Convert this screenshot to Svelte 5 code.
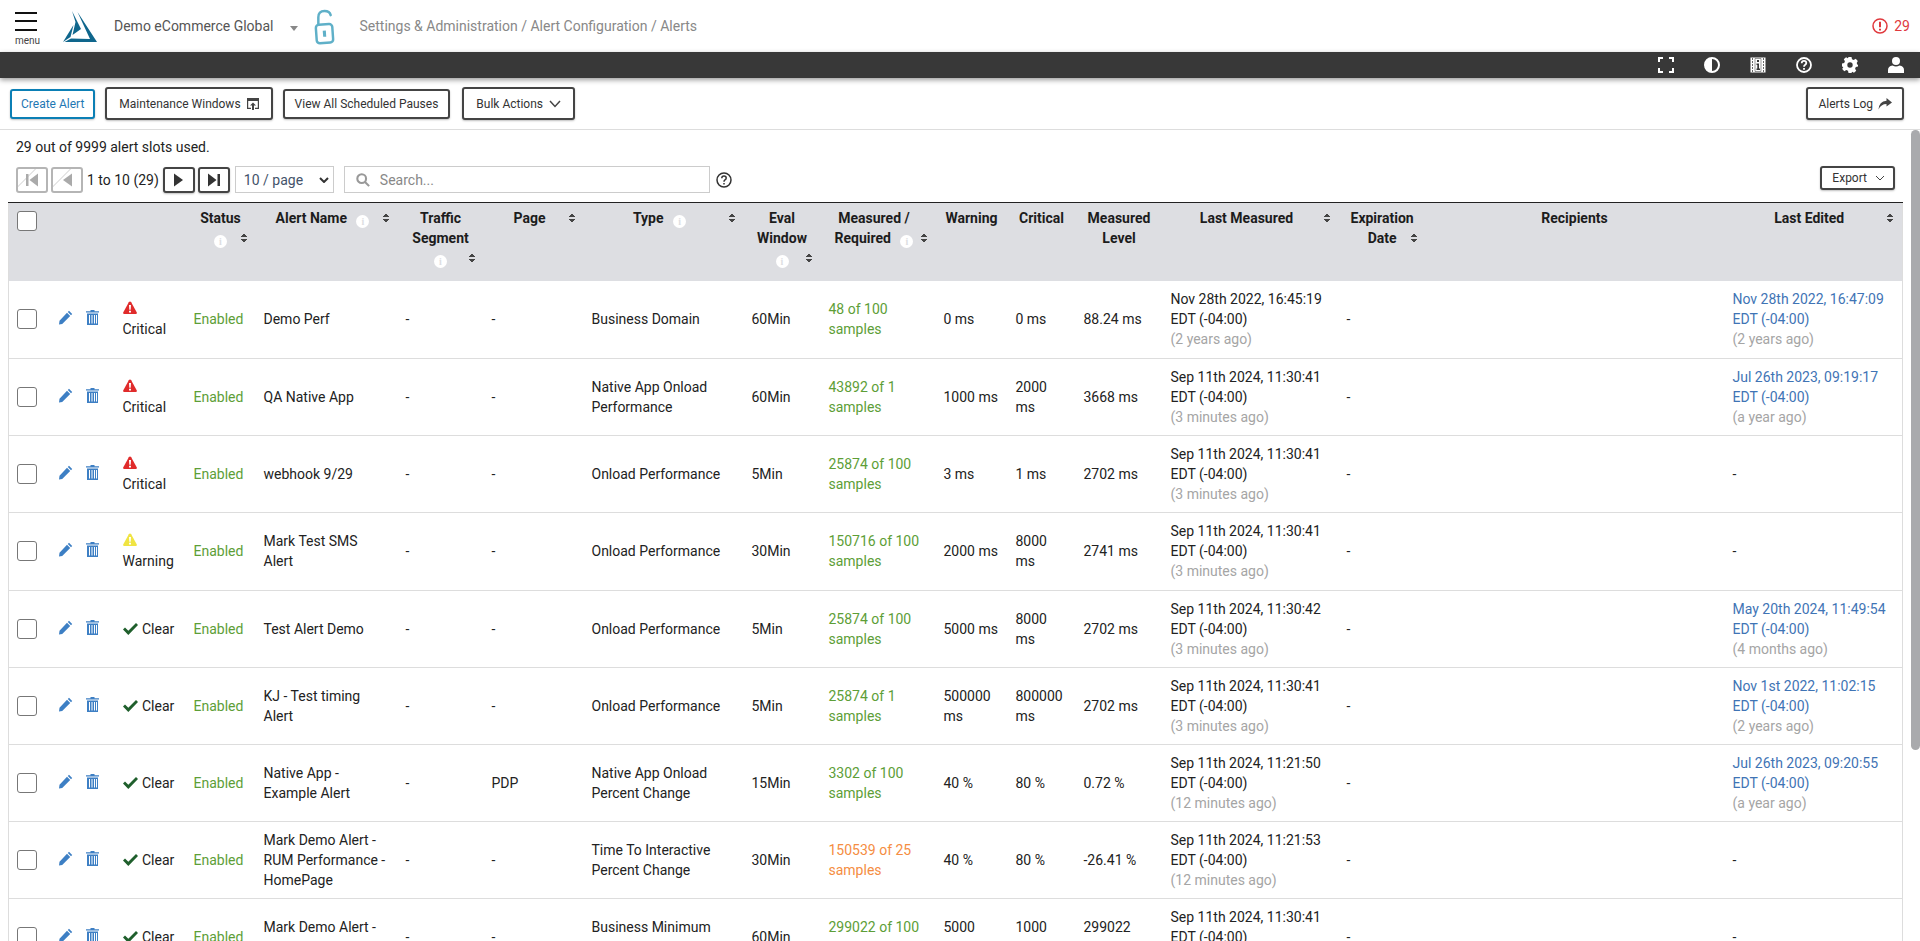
<script>
	const critical = { level: 'Critical', color: '#e02b2b' };
	const warning = { level: 'Warning', color: '#f0e442' };
	const clear = { level: 'Clear' };

	const columns = [
		{ label: '', width: 41 },
		{ label: '', width: 65 },
		{ label: '', width: 71 },
		{ label: 'Status', width: 70, info: true, sort: true, tight: true },
		{ label: 'Alert Name', width: 142, info: true, sort: true },
		{ label: 'Traffic Segment', width: 86, info: true, sort: true, tight: true },
		{ label: 'Page', width: 100, sort: true },
		{ label: 'Type', width: 160, info: true, sort: true },
		{ label: 'Eval Window', width: 77, info: true, sort: true, tight: true },
		{ label: 'Measured / Required', width: 115, info: true, sort: true },
		{ label: 'Warning', width: 72 },
		{ label: 'Critical', width: 68 },
		{ label: 'Measured Level', width: 87 },
		{ label: 'Last Measured', width: 176, sort: true },
		{ label: 'Expiration Date', width: 86, sort: true, tight: true },
		{ label: 'Recipients', width: 300 },
		{ label: 'Last Edited', width: 178, sort: true }
	];

	const rows = [
		{ sev: critical, name: 'Demo Perf', type: 'Business Domain', win: '60Min', req: '48 of 100 samples', warn: '0 ms', crit: '0 ms', lvl: '88.24 ms', last: 'Nov 28th 2022, 16:45:19', ago: '(2 years ago)', edited: 'Nov 28th 2022, 16:47:09', editedAgo: '(2 years ago)' },
		{ sev: critical, name: 'QA Native App', type: 'Native App Onload Performance', win: '60Min', req: '43892 of 1 samples', warn: '1000 ms', crit: '2000 ms', lvl: '3668 ms', last: 'Sep 11th 2024, 11:30:41', ago: '(3 minutes ago)', edited: 'Jul 26th 2023, 09:19:17', editedAgo: '(a year ago)' },
		{ sev: critical, name: 'webhook 9/29', type: 'Onload Performance', win: '5Min', req: '25874 of 100 samples', warn: '3 ms', crit: '1 ms', lvl: '2702 ms', last: 'Sep 11th 2024, 11:30:41', ago: '(3 minutes ago)' },
		{ sev: warning, name: 'Mark Test SMS Alert', type: 'Onload Performance', win: '30Min', req: '150716 of 100 samples', warn: '2000 ms', crit: '8000 ms', lvl: '2741 ms', last: 'Sep 11th 2024, 11:30:41', ago: '(3 minutes ago)' },
		{ sev: clear, name: 'Test Alert Demo', type: 'Onload Performance', win: '5Min', req: '25874 of 100 samples', warn: '5000 ms', crit: '8000 ms', lvl: '2702 ms', last: 'Sep 11th 2024, 11:30:42', ago: '(3 minutes ago)', edited: 'May 20th 2024, 11:49:54', editedAgo: '(4 months ago)' },
		{ sev: clear, name: 'KJ - Test timing Alert', type: 'Onload Performance', win: '5Min', req: '25874 of 1 samples', warn: '500000 ms', crit: '800000 ms', lvl: '2702 ms', last: 'Sep 11th 2024, 11:30:41', ago: '(3 minutes ago)', edited: 'Nov 1st 2022, 11:02:15', editedAgo: '(2 years ago)' },
		{ sev: clear, name: 'Native App - Example Alert', page: 'PDP', type: 'Native App Onload Percent Change', win: '15Min', req: '3302 of 100 samples', warn: '40 %', crit: '80 %', lvl: '0.72 %', last: 'Sep 11th 2024, 11:21:50', ago: '(12 minutes ago)', edited: 'Jul 26th 2023, 09:20:55', editedAgo: '(a year ago)' },
		{ sev: clear, name: 'Mark Demo Alert - RUM Performance - HomePage', type: 'Time To Interactive Percent Change', win: '30Min', req: '150539 of 25 samples', orange: true, warn: '40 %', crit: '80 %', lvl: '-26.41 %', last: 'Sep 11th 2024, 11:21:53', ago: '(12 minutes ago)' },
		{ sev: clear, name: 'Mark Demo Alert - Business', type: 'Business Minimum Sessions', win: '60Min', req: '299022 of 100 samples', warn: '5000 USD', crit: '1000 USD', lvl: '299022 USD', last: 'Sep 11th 2024, 11:30:41', ago: '(3 minutes ago)' }
	];
</script>

<div class="page">
	<header class="top">
		<div class="burger">
			<span></span><span></span><span></span>
			<small>menu</small>
		</div>
		<svg class="logo" viewBox="0 0 34 32" width="34" height="32" fill="#0f668c">
			<path d="M9 0 L18 18 L9.500 24 L12.500 11 Z" />
			<path d="M0 31 L10.500 14 L7.500 26 Z" />
			<path d="M14.500 1 L34 31 L1.500 31 L8 27.500 L27 28 Z" />
		</svg>
		<span class="account">Demo eCommerce Global</span>
		<i class="caret"></i>
		<svg class="lock" viewBox="0 0 20 35" width="21" height="36" fill="none" stroke="#5fb0c8" stroke-width="2.400">
			<g transform="rotate(-4 10 24)">
				<rect x="2" y="15" width="16" height="18" rx="3" />
				<rect x="8.500" y="21" width="3" height="6" fill="#5fb0c8" stroke="none" />
			</g>
			<path d="M4 15 V8 Q4 2 10 2 Q15 2 16 6" stroke-linecap="round" />
		</svg>
		<span class="crumbs">Settings &amp; Administration / Alert Configuration / Alerts</span>
		<span class="alarm">
			<svg viewBox="0 0 16 16" width="16" height="16" fill="none" stroke="#e0393e" stroke-width="1.500">
				<circle cx="8" cy="8" r="7" />
				<path d="M8 3.800 V9.200 M8 10.800 V12.400" stroke-width="2" />
			</svg>
			29
		</span>
	</header>

	<div class="darkbar">
		<svg viewBox="0 0 16 16" width="16" height="16" fill="none" stroke="#fff" stroke-width="2">
			<path d="M1 5 V1 H5 M11 1 H15 V5 M15 11 V15 H11 M5 15 H1 V11" />
		</svg>
		<svg viewBox="0 0 16 16" width="16" height="16">
			<circle cx="8" cy="8" r="7" fill="none" stroke="#fff" stroke-width="2" />
			<path d="M8 1 A7 7 0 0 0 8 15 Z" fill="#fff" />
		</svg>
		<svg viewBox="0 0 16 16" width="16" height="16">
			<rect x="0.500" y="0.500" width="15" height="15" fill="#fff" />
			<path d="M2 2 H3 M2 5 H3 M2 8 H3 M2 11 H3 M2 14 H3 M13 2 H14 M13 5 H14 M13 8 H14 M13 11 H14 M13 14 H14" stroke="#383838" stroke-width="1.500" />
			<path d="M5 1.500 V14.500 H11 V1.500 Z" fill="#fff" stroke="#383838" stroke-width="0.500" />
			<path d="M7 3 H9 V5 H7 Z M6.500 6.500 H9 V11.500 H10 V13 H6.500 V11.500 H7.300 V8 H6.500 Z" fill="#383838" />
		</svg>
		<svg viewBox="0 0 16 16" width="16" height="16" fill="none" stroke="#fff" stroke-width="1.800">
			<circle cx="8" cy="8" r="7" />
			<path d="M5.700 6.200 Q5.800 3.900 8 3.900 Q10.300 3.900 10.300 6 Q10.300 7.200 9 7.900 Q8 8.500 8 9.800" />
			<path d="M8 11 V12.800" />
		</svg>
		<svg viewBox="0 0 16 16" width="16" height="16">
			<path fill="#fff" fill-rule="evenodd" d="M6.500 0 H9.500 L10 2.200 L11.700 2.900 L13.700 1.800 L15.800 4 L14.700 5.900 L15.300 7.400 L16 8 L16 9.500 L13.800 10 L13.100 11.700 L14.200 13.700 L12 15.800 L10.100 14.700 L9.500 16 H6.500 L6 13.800 L4.300 13.100 L2.300 14.200 L0.200 12 L1.300 10.100 L0 9.500 V6.500 L2.200 6 L2.900 4.300 L1.800 2.300 L4 0.200 L5.900 1.300 Z M8 5.300 A2.700 2.700 0 1 0 8 10.700 A2.700 2.700 0 1 0 8 5.300 Z" />
		</svg>
		<svg viewBox="0 0 16 16" width="16" height="16" fill="#fff">
			<circle cx="8" cy="4" r="4" />
			<path d="M0 16 V13 Q0 9 4.500 8.500 Q8 10.500 11.500 8.500 Q16 9 16 13 V16 Z" />
		</svg>
	</div>

	<div class="toolbar">
		<button class="btn create">Create Alert</button>
		<button class="btn tall">
			Maintenance Windows
			<svg viewBox="0 0 12 12" width="12" height="12">
				<path fill="#444" d="M0 0 H12 V11 H8 V9.800 H10.800 V3 H1.200 V9.800 H4 V11 H0 Z" />
				<path fill="#444" d="M6 4.500 L9 7.500 H7 V12 H5 V7.500 H3 Z" />
			</svg>
		</button>
		<button class="btn pauses">View All Scheduled Pauses</button>
		<button class="btn tall bulk">
			Bulk Actions
			<svg viewBox="0 0 12 8" width="12" height="8" fill="none" stroke="#444" stroke-width="1.500">
				<path d="M1 1 L6 6.500 L11 1" />
			</svg>
		</button>
		<button class="btn tall log">
			Alerts Log
			<svg viewBox="0 0 14 12" width="14" height="12">
				<path fill="#444" d="M8.500 0 L14 4.500 L8.500 8.500 V6 Q3 6 0.500 11.500 Q1 3.500 8.500 2.800 Z" />
			</svg>
		</button>
	</div>

	<main class="main">
		<div class="thumb"></div>
		<p class="slots">29 out of 9999 alert slots used.</p>

		<div class="pager">
			<button class="pg off" aria-label="first">
				<svg viewBox="0 0 12 14" width="12" height="14"><path fill="#aaa" d="M0 1 H2.500 V13 H0 Z M12 0.500 V13.500 L3.500 7 Z" /></svg>
			</button>
			<button class="pg off" aria-label="previous">
				<svg viewBox="0 0 10 14" width="10" height="14"><path fill="#aaa" d="M10 0.500 V13.500 L1 7 Z" /></svg>
			</button>
			<span class="range">1 to 10 (29)</span>
			<button class="pg" aria-label="next">
				<svg viewBox="0 0 10 14" width="10" height="14"><path fill="#333" d="M0 0.500 V13.500 L9 7 Z" /></svg>
			</button>
			<button class="pg" aria-label="last">
				<svg viewBox="0 0 12 14" width="12" height="14"><path fill="#333" d="M0 0.500 V13.500 L8.500 7 Z M9.500 1 H12 V13 H9.500 Z" /></svg>
			</button>
			<div class="perpage">
				10 / page
				<svg viewBox="0 0 10 6" width="10" height="6" fill="none" stroke="#333" stroke-width="2"><path d="M1 1 L5 5 L9 1" /></svg>
			</div>
			<div class="search">
				<svg viewBox="0 0 16 16" width="14" height="14" fill="none" stroke="#999" stroke-width="2.400">
					<circle cx="6.500" cy="6.500" r="5" />
					<path d="M10 10 L15 15" />
				</svg>
				<span>Search...</span>
			</div>
			<svg class="help" viewBox="0 0 16 16" width="16" height="16" fill="none" stroke="#333" stroke-width="1.500">
				<circle cx="8" cy="8" r="7" />
				<path d="M5.800 6.200 Q5.800 4 8 4 Q10.200 4 10.200 6 Q10.200 7.200 9 7.900 Q8 8.500 8 9.800 M8 11 V12.600" />
			</svg>
			<button class="btn export">
				Export
				<svg viewBox="0 0 10 6" width="10" height="6" fill="none" stroke="#444" stroke-width="1"><path d="M1 1 L5 5 L9 1" /></svg>
			</button>
		</div>

		<table>
			<colgroup>
				{#each columns as c}
					<col style="width: {c.width}px" />
				{/each}
			</colgroup>
			<thead>
				<tr>
					{#each columns as c, i}
						<th class:tight={c.tight}>
							{#if i == 0}
								<span class="check"></span>
							{:else if c.sort}
								<div class="head">
									<div>
										{c.label}
										{#if c.info}
											<i class="info">i</i>
										{/if}
									</div>
									<span class="sort"></span>
								</div>
							{:else}
								{c.label}
							{/if}
						</th>
					{/each}
				</tr>
			</thead>
			<tbody>
				{#each rows as r}
					<tr>
						<td class="box"><span class="check"></span></td>
						<td>
							<div class="actions">
								<svg viewBox="0 0 15 15" width="15" height="15" fill="#3d7fc4">
									<path d="M11 0.800 L14.200 4 L13 5.200 L9.800 2 Z M9 2.800 L12.200 6 L4.200 14 L1 14.500 L1.500 10.800 Z" />
								</svg>
								<svg viewBox="0 0 13 15" width="13" height="15" fill="#3d7fc4">
									<path d="M4.500 0 H8.500 V1.200 H13 V2.500 H0 V1.200 H4.500 Z" />
									<path fill-rule="evenodd" d="M1 3.500 H12 V15 H1 Z M3 5 V13.500 H4 V5 Z M5.500 5 V13.500 H6.500 V5 Z M8 5 V13.500 H9 V5 Z M10 5 V13.500 H11 V5 Z" />
								</svg>
							</div>
						</td>
						<td class="sev">
							{#if r.sev.color}
								<svg viewBox="0 0 14 14" width="14" height="14">
									<path fill={r.sev.color} d="M7 0.500 Q7.800 0.500 8.200 1.200 L13.800 11.500 Q14.200 13 12.800 13 H1.200 Q-0.200 13 0.200 11.500 L5.800 1.200 Q6.200 0.500 7 0.500 Z" />
									<path fill="#fff" d="M6 4 H8 L7.700 8.800 H6.300 Z M6 9.800 H8 V11.500 H6 Z" />
								</svg>
								<br />
							{:else}
								<svg class="tick" viewBox="0 0 15 12" width="15" height="12">
									<path fill="#1f5f2c" d="M0 6.500 L2 4.500 L5.300 7.800 L13 0 L15 2 L5.300 12 Z" />
								</svg>
							{/if}
							{r.sev.level}
						</td>
						<td class="green">Enabled</td>
						<td>{r.name}</td>
						<td>-</td>
						<td>{r.page ?? '-'}</td>
						<td>{r.type}</td>
						<td>{r.win}</td>
						<td class={r.orange ? 'orange' : 'green'}>{r.req}</td>
						<td>{r.warn}</td>
						<td>{r.crit}</td>
						<td>{r.lvl}</td>
						<td>{r.last}<br />EDT (-04:00)<br /><span class="grey">{r.ago}</span></td>
						<td>-</td>
						<td></td>
						<td>
							{#if r.edited}
								<span class="link">{r.edited}<br />EDT (-04:00)</span><br /><span class="grey">{r.editedAgo}</span>
							{:else}
								-
							{/if}
						</td>
					</tr>
				{/each}
			</tbody>
		</table>
	</main>
</div>

<style>
	:global(body) {
		overflow: hidden;
	}

	.page {
		height: 100vh;
		display: flex;
		flex-direction: column;
		font-family: Roboto, 'Liberation Sans', sans-serif;
		font-size: 14px;
		line-height: 20px;
		color: #222;
		background: #fff;
	}

	.top {
		height: 52px;
		flex: none;
		display: flex;
		align-items: center;
		padding: 0 10px 0 15px;
		box-sizing: border-box;
	}

	.burger {
		width: 22px;
		height: 42px;
		margin-top: 9px;
		display: flex;
		flex-direction: column;
		gap: 6.500px;
		position: relative;
		padding-top: 2px;
		box-sizing: border-box;
	}

	.burger span {
		height: 2px;
		background: #111;
		flex: none;
	}

	.burger small {
		font-size: 10px;
		line-height: 10px;
		color: #444;
		margin-top: -1.500px;
		white-space: nowrap;
	}

	.logo {
		margin-left: 26px;
		margin-top: 2px;
	}

	.account {
		margin-left: 17px;
		color: #555;
	}

	.caret {
		width: 0;
		height: 0;
		margin: 4px 0 0 16px;
		border: 4px solid transparent;
		border-top: 5px solid #888;
		border-bottom: 0;
	}

	.lock {
		margin-left: 16px;
		margin-top: 1px;
	}

	.crumbs {
		margin-left: 25px;
		color: #888;
	}

	.alarm {
		margin-left: auto;
		display: flex;
		align-items: center;
		gap: 6px;
		color: #e0393e;
	}

	.darkbar {
		height: 26px;
		flex: none;
		background: #383838;
		display: flex;
		align-items: center;
		justify-content: flex-end;
		gap: 30px;
		padding-right: 16px;
		box-shadow: 0 2px 5px rgba(0, 0, 0, 0.4);
		position: relative;
	}

	.toolbar {
		height: 52px;
		flex: none;
		box-sizing: border-box;
		border-bottom: 1px solid #ddd;
		display: flex;
		align-items: center;
		gap: 10px;
		padding: 0 16px 0 10px;
	}

	.btn {
		height: 30px;
		padding: 0 12px;
		display: inline-flex;
		align-items: center;
		gap: 6px;
		background: #fff;
		border: 2px solid #444;
		border-radius: 3px;
		box-shadow: 0 1px 2px rgba(0, 0, 0, 0.25);
		font: 12px Roboto, sans-serif;
		color: #333;
	}

	.btn.tall {
		height: 33px;
	}

	.create {
		border-color: #0b7fb5;
		color: #1f78b4;
		padding: 0 9px;
	}

	.pauses {
		padding: 0 10px;
	}

	.bulk {
		margin-left: 2px;
	}

	.log {
		margin-left: auto;
		padding: 0 10px;
		gap: 5px;
	}

	.main {
		flex: 1;
		min-height: 0;
		overflow: hidden;
		padding: 0 18px 0 8px;
		position: relative;
	}

	.thumb {
		position: absolute;
		top: 0;
		right: 0;
		width: 9px;
		height: 620px;
		background: #a9aaad;
		border-radius: 5px;
	}

	.slots {
		margin: 7px 0 0 8px;
	}

	.pager {
		display: flex;
		align-items: center;
		margin: 9px 7px 0 8px;
		height: 27px;
		gap: 3px;
	}

	.pg {
		width: 32px;
		height: 26px;
		padding: 0;
		display: flex;
		align-items: center;
		justify-content: center;
		background: #fff;
		border: 2px solid #444;
		border-radius: 3px;
		box-shadow: 0 1px 2px rgba(0, 0, 0, 0.25);
	}

	.pg.off {
		border-color: #b5b5b5;
		background: repeating-linear-gradient(135deg, #fff 0 12px, #e6e6e6 12px 13px, #fff 13px 24px);
		box-shadow: none;
	}

	.range {
		margin: 0 1px;
		white-space: nowrap;
	}

	.perpage {
		width: 99px;
		height: 27px;
		margin-left: 2px;
		box-sizing: border-box;
		border: 1px solid #ccc;
		display: flex;
		align-items: center;
		justify-content: space-between;
		padding: 0 4px 0 8px;
		color: #44536a;
	}

	.search {
		width: 366px;
		height: 27px;
		margin-left: 7px;
		box-sizing: border-box;
		border: 1px solid #ccc;
		display: flex;
		align-items: center;
		gap: 10px;
		padding: 0 11px;
		color: #888;
	}

	.help {
		margin-left: 3px;
	}

	.export {
		margin-left: auto;
		height: 24px;
		gap: 8px;
		padding: 0 8px 0 10px;
		margin-top: -3px;
	}

	table {
		width: 1894px;
		table-layout: fixed;
		border-collapse: collapse;
		margin-top: 9px;
		border-left: 1px solid #ddd;
		border-right: 1px solid #ddd;
	}

	th {
		height: 78px;
		padding: 5px 12px 0 4px;
		box-sizing: border-box;
		vertical-align: top;
		background: #dddee2;
		border-top: 1px solid #222;
		font-weight: 700;
		text-align: center;
		color: #1c1c1c;
	}

	th:not(:has(.head)) {
		padding: 5px 8px 0;
	}

	th.tight {
		padding-left: 12px;
	}

	th:first-child {
		text-align: left;
		padding: 8px 0 0 8px;
	}

	.head {
		display: grid;
		grid-template-columns: 1fr 0;
		align-items: end;
	}

	.info {
		display: inline-block;
		width: 13px;
		height: 13px;
		margin-left: 6px;
		border-radius: 50%;
		background: #fff;
		color: #dddee2;
		font: 700 10px/13px 'Liberation Serif', serif;
		text-align: center;
		vertical-align: -2px;
	}

	.tight .info {
		margin-left: 0;
	}

	.sort {
		display: block;
		width: 8px;
		height: 20px;
		margin-left: -4px;
		background:
			linear-gradient(135deg, transparent 50%, #444 50%) 0 6px / 4px 3px no-repeat,
			linear-gradient(225deg, transparent 50%, #444 50%) 4px 6px / 4px 3px no-repeat,
			linear-gradient(45deg, transparent 50%, #444 50%) 0 11px / 4px 3px no-repeat,
			linear-gradient(315deg, transparent 50%, #444 50%) 4px 11px / 4px 3px no-repeat;
	}

	td {
		height: 77.200px;
		padding: 8px;
		box-sizing: border-box;
		border-bottom: 1px solid #ddd;
		vertical-align: middle;
		overflow-wrap: break-word;
	}

	tr:first-child td {
		height: 78px;
	}

	td.box {
		padding: 0 0 0 8px;
	}

	.check {
		display: block;
		width: 20px;
		height: 20px;
		box-sizing: border-box;
		border: 1px solid #777;
		border-radius: 3px;
		background: #fff;
	}

	.actions {
		display: flex;
		align-items: center;
		gap: 13px;
		margin-top: -3px;
	}

	.sev svg {
		vertical-align: -1px;
	}

	.sev .tick {
		margin-right: 1px;
	}

	.green {
		color: #5d9e37;
	}

	.orange {
		color: #f58d42;
	}

	.grey {
		color: #a5a5a5;
	}

	.link {
		color: #3f74b5;
	}
</style>
